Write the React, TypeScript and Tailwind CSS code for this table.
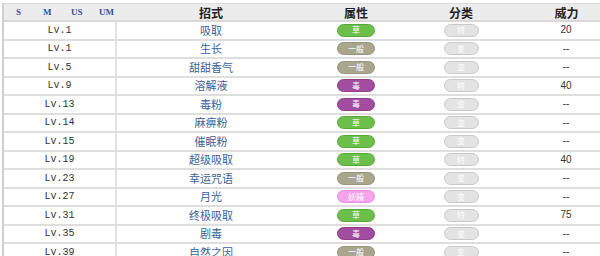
import React from "react";

type Row = { lv: string; move: string; type: string; cat: string; power: string };

const rows: Row[] = [
  { lv: "Lv.1", move: "吸取", type: "草", cat: "特", power: "20" },
  { lv: "Lv.1", move: "生长", type: "一般", cat: "变", power: "--" },
  { lv: "Lv.5", move: "甜甜香气", type: "一般", cat: "变", power: "--" },
  { lv: "Lv.9", move: "溶解液", type: "毒", cat: "特", power: "40" },
  { lv: "Lv.13", move: "毒粉", type: "毒", cat: "变", power: "--" },
  { lv: "Lv.14", move: "麻痹粉", type: "草", cat: "变", power: "--" },
  { lv: "Lv.15", move: "催眠粉", type: "草", cat: "变", power: "--" },
  { lv: "Lv.19", move: "超级吸取", type: "草", cat: "特", power: "40" },
  { lv: "Lv.23", move: "幸运咒语", type: "一般", cat: "变", power: "--" },
  { lv: "Lv.27", move: "月光", type: "妖精", cat: "变", power: "--" },
  { lv: "Lv.31", move: "终极吸取", type: "草", cat: "特", power: "75" },
  { lv: "Lv.35", move: "剧毒", type: "毒", cat: "变", power: "--" },
  { lv: "Lv.39", move: "自然之因", type: "一般", cat: "变", power: "--" },
];

const typeClass: Record<string, string> = {
  草: "bg-[#6dbf4b] border-[#5aa83c]",
  一般: "bg-[#a8a78e] border-[#96957d]",
  毒: "bg-[#a24d9f] border-[#8d3f8a]",
  妖精: "bg-[#f4a3ec] border-[#e690dd]",
};

const cjk = { fontFamily: '"Noto Sans CJK SC", "Liberation Sans", sans-serif' };
const mono = { fontFamily: '"Liberation Mono", "DejaVu Sans Mono", monospace' };

export default function App() {
  return (
    <div className="w-[600px] h-[256px] overflow-hidden bg-white pt-[3px] pl-[2px]">
      <div className="w-[620px] border-l-2 border-[#cfcfcf]">
        <div
          className="grid grid-cols-[113px_188px_102px_108px_107px] h-[19px] bg-[#ececec] border-t border-[#dcdcdc] border-b-2 border-b-[#d8d8d8] items-center text-[12px] font-bold text-[#222]"
          style={cjk}
        >
          <div
            className="flex items-center text-[9px] font-bold text-[#3a4fa0] pl-[12px] gap-0"
            style={{ fontFamily: '"Liberation Serif", serif' }}
          >
            <span className="w-[27px]">S</span>
            <span className="w-[28px]">M</span>
            <span className="w-[28px]">US</span>
            <span>UM</span>
          </div>
          <div className="text-center">招式</div>
          <div className="text-center">属性</div>
          <div className="text-center">分类</div>
          <div className="text-center pr-[4px]">威力</div>
        </div>
        {rows.map((r, i) => (
          <div
            key={i}
            className="grid grid-cols-[113px_188px_102px_108px_107px] h-[18.5px] border-b-2 border-[#dedede] items-center"
          >
            <div
              className="h-full flex items-center justify-center border-r-2 border-[#e2e2e2] text-[10px] text-[#333]"
              style={mono}
            >
              {r.lv}
            </div>
            <div className="text-center text-[11px] text-[#3a6396] leading-none" style={cjk}>
              {r.move}
            </div>
            <div className="flex justify-center">
              <span
                className={`w-[38px] h-[13px] rounded-full border flex items-center justify-center text-[8px] text-white leading-none ${typeClass[r.type]}`}
                style={cjk}
              >
                {r.type}
              </span>
            </div>
            <div className="flex justify-center">
              <span
                className="w-[35px] h-[13px] rounded-full border border-[#c9c9c9] bg-[#e3e3e3] flex items-center justify-center text-[8px] text-white leading-none"
                style={cjk}
              >
                {r.cat}
              </span>
            </div>
            <div
              className="text-center text-[10px] text-[#333] pr-[5px] leading-none"
              style={{ fontFamily: '"Liberation Sans", sans-serif' }}
            >
              {r.power}
            </div>
          </div>
        ))}
      </div>
    </div>
  );
}
